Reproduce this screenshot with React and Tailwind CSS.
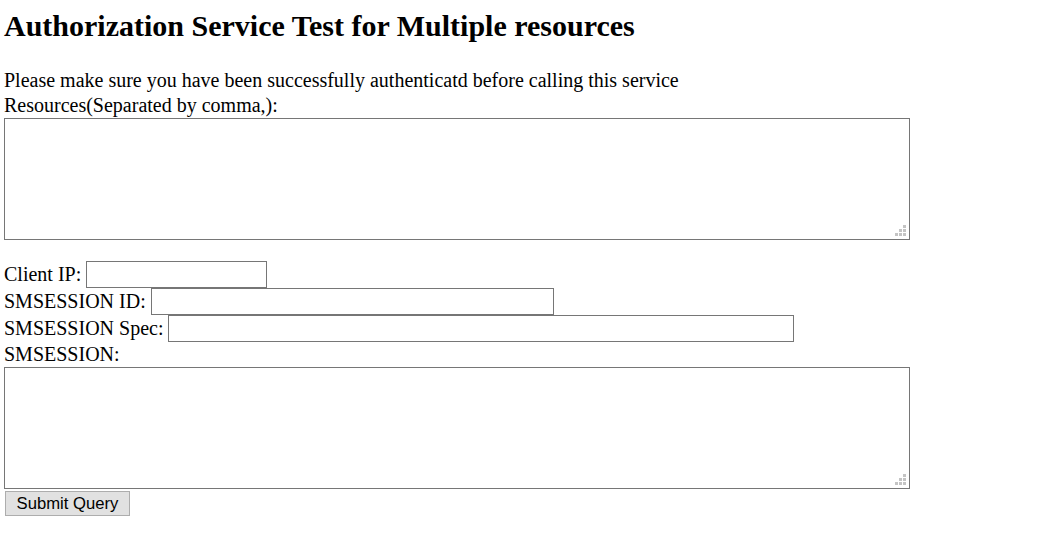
import { useState } from "react";

function FieldRow({ label, width, value, onChange }) {
    return (
        <div className="flex items-center gap-[5px] h-[27px]">
            <span>{label}</span>
            <input
                type="text"
                value={value}
                onChange={e => onChange(e.target.value)}
                className="h-[27px] border border-[#767676] bg-white px-[3px] text-[16.67px] outline-none"
                style={{ width }}
            />
        </div>
    );
}

// windows style resize grip, dots only
function Grip() {
    return (
        <svg width="11" height="11" viewBox="0 0 11 11" className="absolute right-[4px] bottom-[4px] pointer-events-none">
            <rect x="8" y="0" width="3" height="3" fill="#c4c4c4" />
            <rect x="4" y="4" width="3" height="3" fill="#c4c4c4" />
            <rect x="8" y="4" width="3" height="3" fill="#c4c4c4" />
            <rect x="0" y="8" width="3" height="3" fill="#c4c4c4" />
            <rect x="4" y="8" width="3" height="3" fill="#c4c4c4" />
            <rect x="8" y="8" width="3" height="3" fill="#c4c4c4" />
        </svg>
    );
}

function Area({ value, onChange, className }) {
    return (
        <div className={"relative w-[906px] h-[122px] " + className}>
            <textarea
                value={value}
                onChange={e => onChange(e.target.value)}
                className="block w-full h-full border border-[#767676] bg-white p-[2px] text-[16.67px] outline-none resize-none"
            />
            <Grip />
        </div>
    );
}

function App() {
    const [resources, setResources] = useState("")
    const [clientIp, setClientIp] = useState("")
    const [sessionId, setSessionId] = useState("")
    const [sessionSpec, setSessionSpec] = useState("")
    const [session, setSession] = useState("")

    const submit = e => {
        e.preventDefault()
        console.log({ resources, clientIp, sessionId, sessionSpec, session })
    }

    return (
        <div className="min-h-[555px] bg-white pl-[4px] text-black text-[20px] leading-[23px] font-['Liberation_Serif','Times_New_Roman',serif]">
            <h2 className="pt-[8px] text-[30px] leading-[35px] font-bold">Authorization Service Test for Multiple resources</h2>
            <form onSubmit={submit} className="mt-[25px] flex flex-col items-start">
                <div className="leading-[24px]">Please make sure you have been successfully authenticatd before calling this service</div>
                <div className="pt-[1px] leading-[24px]">Resources(Separated by comma,):</div>
                <Area value={resources} onChange={setResources} className="mt-[1px]" />
                <div className="mt-[21px] flex flex-col">
                    <FieldRow label="Client IP:" width={181} value={clientIp} onChange={setClientIp} />
                    <FieldRow label="SMSESSION ID:" width={403} value={sessionId} onChange={setSessionId} />
                    <FieldRow label="SMSESSION Spec:" width={626} value={sessionSpec} onChange={setSessionSpec} />
                </div>
                <div className="pt-[1px]">SMSESSION:</div>
                <Area value={session} onChange={setSession} className="mt-[1px]" />
                <button
                    type="submit"
                    className="mt-[2px] ml-[1px] w-[125px] h-[25px] border border-[#adadad] bg-[#e1e1e1] text-[16.67px] leading-[20px] text-black font-['Liberation_Sans',Arial,sans-serif]"
                >
                    Submit Query
                </button>
            </form>
        </div>
    );
}

export default App;
